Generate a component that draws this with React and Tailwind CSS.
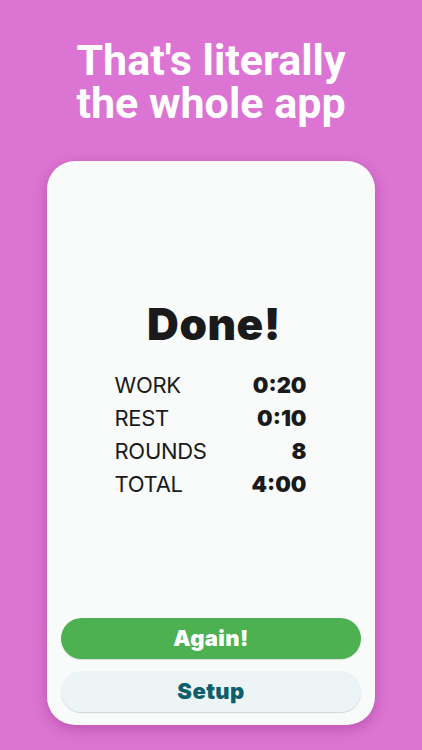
export default function App() {
  const stats = [
    ["WORK", "0:20"],
    ["REST", "0:10"],
    ["ROUNDS", "8"],
    ["TOTAL", "4:00"],
  ];
  return (
    <div className="w-[422px] h-[750px] bg-[#dc74d3] flex flex-col overflow-hidden">
      <div
        className="pt-[39px] text-center text-white font-bold text-[43px] leading-[43px]"
        style={{ fontFamily: "Roboto, 'Liberation Sans', sans-serif" }}
      >
        <div>That's literally</div>
        <div>the whole app</div>
      </div>
      <div
        className="mt-[36px] mx-[47px] h-[564px] bg-[#f9fafa] rounded-[28px] shadow-[0_4px_14px_rgba(120,30,110,0.35)] flex flex-col px-[14px] pb-[13px]"
        style={{ fontFamily: "Inter, 'Liberation Sans', sans-serif" }}
      >
        <div className="pt-[141px] flex-1 flex flex-col items-center">
          <div className="ml-[6px] text-[44px] leading-[44px] font-black text-[#1a1a1a] tracking-[0.5px]">
            Done!
          </div>
          <div className="mt-[23px] mr-[1px] w-[192px] flex flex-col">
            {stats.map(([k, v]) => (
              <div key={k} className="flex justify-between text-[22px] leading-[33px] text-[#1a1a1a]">
                <span className="font-normal tracking-[-0.3px]">{k}</span>
                <span className="font-black">{v}</span>
              </div>
            ))}
          </div>
        </div>
        <div className="flex flex-col gap-[12px]">
          <div className="h-[41px] rounded-full bg-[#4db151] flex items-center justify-center text-white font-black text-[22px] tracking-[0.4px] shadow-[0_1px_1px_rgba(0,0,0,0.12)]">
            Again!
          </div>
          <div className="h-[41px] rounded-full bg-[#edf4f6] flex items-center justify-center text-[#0d5f6c] font-black text-[22px] tracking-[0.4px] shadow-[0_1px_1px_rgba(0,0,0,0.15)]">
            Setup
          </div>
        </div>
      </div>
    </div>
  );
}
